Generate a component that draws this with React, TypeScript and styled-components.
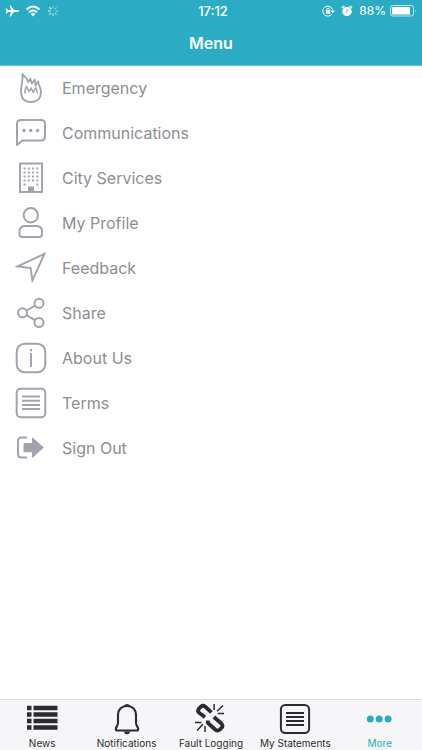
import React from "react";
import styled, { createGlobalStyle } from "styled-components";

const teal = "#2bacc4";
const grey = "#a3a3ad";
const dark = "#2c2c30";

const GlobalStyle = createGlobalStyle`
  *, *::before, *::after { box-sizing: border-box; }
  body {
    margin: 0;
    background: #fff;
    font-family: Inter, "Liberation Sans", sans-serif;
  }
`;

const Screen = styled.div`
  display: flex;
  flex-direction: column;
  min-height: 100vh;
`;

const Header = styled.header`
  background: ${teal};
  color: #fff;
  box-shadow: 0 1px 0 #6cc3d5;
`;

const StatusBar = styled.div`
  display: grid;
  grid-template-columns: 1fr auto 1fr;
  align-items: center;
  height: 22px;
  padding: 0 5px;
`;

const StatusGroup = styled.div<{ $end?: boolean }>`
  display: flex;
  align-items: center;
  justify-content: ${(p) => (p.$end ? "flex-end" : "flex-start")};
  gap: ${(p) => (p.$end ? 4 : 6)}px;
`;

const Alarm = styled.svg`
  margin: 0 2px;
`;

const Clock = styled.time`
  padding-left: 4px;
  font-size: 13px;
  font-weight: 500;
  line-height: 16px;
`;

const Charge = styled.span`
  font-size: 12px;
  line-height: 16px;
`;

const Title = styled.h1`
  margin: 0;
  height: 43px;
  font-size: 16px;
  font-weight: 600;
  line-height: 43px;
  text-align: center;
`;

const Main = styled.main`
  flex: 1;
`;

const List = styled.ul`
  margin: 0;
  padding: 0;
  list-style: none;
`;

const MenuLink = styled.a`
  display: flex;
  align-items: center;
  gap: 15px;
  height: 45px;
  padding: 0 15px;
  color: #8e8e93;
  font-size: 16px;
  line-height: 24px;
  text-decoration: none;
`;

const RowIcon = styled.svg`
  flex: none;
  width: 32px;
  height: 32px;
  fill: none;
  stroke: ${grey};
  stroke-width: 2;
  stroke-linejoin: round;
`;

const TabBar = styled.nav`
  position: sticky;
  bottom: 0;
  display: grid;
  grid-template-columns: repeat(5, 1fr);
  background: #f6f6f8;
  border-top: 1px solid #d9d9dc;
`;

const Tab = styled.button<{ $active?: boolean }>`
  display: flex;
  flex-direction: column;
  align-items: center;
  gap: 2px;
  min-width: 0;
  padding: 3px 0 0;
  border: 0;
  background: none;
  color: ${(p) => (p.$active ? teal : dark)};
  font-family: inherit;
  font-size: 10px;
  line-height: 13px;
  white-space: nowrap;
`;

const TabIcon = styled.svg`
  width: 32px;
  height: 32px;
  fill: none;
  stroke: currentColor;
  stroke-width: 2;
`;

const buildingDots = [6, 10, 14, 18].flatMap((y) => [9.5, 13.8, 18.1, 22.4].map((x) => ({ x, y })));

const menu: { label: string; icon: React.ReactNode }[] = [
  {
    label: "Emergency",
    icon: (
      <>
        <path
          strokeWidth="1.8"
          d="M7.300 2C8.500 8 6 12.500 6 19.500C6.200 26.500 10 30 15.800 30C22 30 26 26.300 26 20C26 16.500 23.800 14 23.200 9.500L20.500 13.500L19.700 7.500L16.900 11.500L15.300 6.600L13.300 10C12 6.300 9.800 4.500 7.300 2Z"
        />
        <path
          strokeWidth="1.500"
          d="M9.800 21.500C9.500 18.500 10.800 16.500 11.500 14.500L14 19.500L16.200 16L18.200 20.500L20.800 15.500C21.300 17.500 22.500 18.500 22.200 21.500"
        />
      </>
    ),
  },
  {
    label: "Communications",
    icon: (
      <>
        <path d="M2 28V7Q2 3 6 3H26Q30 3 30 7V19.500Q30 23.500 26 23.500H7.500Z" />
        <g fill={grey} stroke="none">
          <circle cx="9" cy="13.500" r="1.700" />
          <circle cx="15.800" cy="13.500" r="1.700" />
          <circle cx="22.600" cy="13.500" r="1.700" />
        </g>
      </>
    ),
  },
  {
    label: "City Services",
    icon: (
      <>
        <rect x="5" y="1.500" width="22" height="28.500" strokeLinejoin="miter" />
        <g fill={grey} stroke="none">
          {buildingDots.map((d) => (
            <rect key={`${d.x}-${d.y}`} x={d.x - 1} y={d.y - 0.5} width="2" height="2" />
          ))}
          <rect x="8.500" y="21.500" width="2" height="2" />
          <rect x="21.400" y="21.500" width="2" height="2" />
          <rect x="13" y="24.500" width="6" height="5" />
        </g>
      </>
    ),
  },
  {
    label: "My Profile",
    icon: (
      <>
        <circle cx="15.800" cy="8.300" r="7.200" />
        <path d="M10 19H21.500Q27 19 27 24.500V27Q27 30 24 30H7.500Q4.500 30 4.500 27V24.500Q4.500 19 10 19Z" />
      </>
    ),
  },
  {
    label: "Feedback",
    icon: <path strokeWidth="1.900" strokeLinejoin="miter" d="M2.500 14.300L29.500 1.800L17.400 28.500L15.600 16Z" />,
  },
  {
    label: "Share",
    icon: (
      <>
        <circle cx="7.500" cy="15.800" r="4.500" />
        <circle cx="24" cy="6.300" r="4.500" />
        <circle cx="24" cy="25.500" r="4.500" />
        <path d="M11.500 13.500L20 8.600M11.500 18.200L20 23.200" />
      </>
    ),
  },
  {
    label: "About Us",
    icon: (
      <>
        <rect x="1.700" y="1.700" width="28.600" height="28.600" rx="8" />
        <path d="M16 11V25M16 7V9.300" />
      </>
    ),
  },
  {
    label: "Terms",
    icon: (
      <>
        <rect x="1.700" y="1.700" width="28.600" height="28.600" rx="4" />
        <path d="M7 9.500H25M7 13.700H25M7 17.900H25M7 22.100H25" />
      </>
    ),
  },
  {
    label: "Sign Out",
    icon: (
      <>
        <path d="M12 5.500H6.500Q3 5.500 3 9V22Q3 25.500 6.500 25.500H12" />
        <path fill={grey} strokeWidth="1" d="M9 11.500H17.500V6L28.300 15.500L17.500 25.300V19.800H9Z" />
      </>
    ),
  },
];

const tabs: { label: string; active?: boolean; icon: React.ReactNode }[] = [
  {
    label: "News",
    icon: (
      <path
        strokeWidth="4.600"
        d="M1 5H5.500M7.500 5H31.500M1 11.500H5.500M7.500 11.500H31.500M1 18H5.500M7.500 18H31.500M1 24.500H5.500M7.500 24.500H31.500"
      />
    ),
  },
  {
    label: "Notifications",
    icon: (
      <>
        <path
          strokeWidth="2.100"
          strokeLinejoin="round"
          d="M16 3C10.300 3 7 6.500 7 12V20C7 22.500 4.800 24 4.800 26Q4.800 27.500 6.300 27.500H25.700Q27.200 27.500 27.200 26C27.200 24 25 22.500 25 20V12C25 6.500 21.700 3 16 3Z"
        />
        <path fill="currentColor" stroke="none" d="M12.500 3Q16 -1 19.500 3ZM12.700 28.500H19.300Q18.500 31.300 16 31.300Q13.500 31.300 12.700 28.500Z" />
      </>
    ),
  },
  {
    label: "Fault Logging",
    icon: (
      <>
        <path
          strokeWidth="3.800"
          d="M10 14.200L4 9.700Q2.200 7.800 4 5.500L5.900 3.700Q7.900 2 10.100 3.600L16.400 9.300M18.900 14L26.400 20.500Q28.400 22.500 26.600 24.800L24.800 26.600Q22.600 28.400 20.400 26.700L12.900 20L12.900 17.500"
        />
        <path
          strokeWidth="1.500"
          d="M19.100 1V7M28 2.500L22 8.200M29 10.500H22.700M0 19.500H6.500M2 27.500L8 21.300M10 29V23"
        />
      </>
    ),
  },
  {
    label: "My Statements",
    icon: (
      <>
        <rect x="1.900" y="1.900" width="28.200" height="28.200" rx="4.500" />
        <path d="M7 10H25M7 14H25M7 18H25M7 22H25" />
      </>
    ),
  },
  {
    label: "More",
    active: true,
    icon: (
      <g fill="currentColor" stroke="none">
        <circle cx="6.300" cy="16" r="3.500" />
        <circle cx="15.200" cy="16" r="3.500" />
        <circle cx="24.100" cy="16" r="3.500" />
      </g>
    ),
  },
];

const spokes = [0, 45, 90, 135, 180, 225, 270, 315];

export default function App() {
  return (
    <Screen>
      <GlobalStyle />
      <Header>
        <StatusBar>
          <StatusGroup>
            <svg width="14" height="12" viewBox="0 0 14 12" fill="#fff" aria-label="Airplane mode">
              <path d="M14 6Q14 6.900 12.500 6.900H9L5.800 11.500H4.500L6 6.900H3L1.700 8.500H0.800L1.500 6L0.800 3.500H1.700L3 5.100H6L4.500 0.500H5.800L9 5.100H12.500Q14 5.100 14 6Z" />
            </svg>
            <svg width="16" height="12" viewBox="0 0 16 12" fill="none" stroke="#fff" strokeWidth="2" aria-label="Wi-Fi">
              <path d="M1.500 4.500Q8 -1.500 14.500 4.500M4 7.300Q8 3.600 12 7.300" />
              <path fill="#fff" stroke="none" d="M5.500 9Q8 7 10.500 9L8 11.500Z" />
            </svg>
            <svg width="12" height="12" viewBox="-6 -6 12 12" stroke="#fff" strokeWidth="1.100" aria-label="Loading">
              {spokes.map((a, i) => (
                <path key={a} d="M0 -2.500V-5" transform={`rotate(${a})`} opacity={0.4 + i * 0.08} />
              ))}
            </svg>
          </StatusGroup>
          <Clock>17:12</Clock>
          <StatusGroup $end>
            <svg width="13" height="12" viewBox="0 0 13 12" fill="none" stroke="#fff" aria-label="Rotation locked">
              <path d="M10 8.800A5 5 0 1 1 10.500 4.500" />
              <path d="M8.800 5.500H12.800L10.800 8.200Z" fill="#fff" stroke="none" />
              <rect x="3.800" y="5.300" width="4.400" height="3.400" fill="#fff" stroke="none" />
              <path d="M4.700 5.500V4.300Q4.700 3.200 6 3.200Q7.300 3.200 7.300 4.300V5.500" />
            </svg>
            <Alarm width="12" height="12" viewBox="0 0 12 12" aria-label="Alarm">
              <circle cx="6" cy="6.500" r="4.700" fill="#fff" />
              <path d="M1 3L3.200 1M11 3L8.800 1" stroke="#fff" strokeWidth="1.600" />
              <path d="M6.200 4V6.800H4.300" fill="none" stroke={teal} strokeWidth="0.700" />
            </Alarm>
            <Charge>88%</Charge>
            <svg width="27" height="12" viewBox="0 0 27 12" aria-label="Battery">
              <rect x="0.500" y="0.500" width="23" height="10.500" rx="2" fill="none" stroke="#fff" opacity="0.700" />
              <rect x="2" y="2" width="18" height="7.500" rx="0.500" fill="#fff" />
              <path d="M25 4.200Q26.500 6 25 7.800Z" fill="#fff" opacity="0.700" />
            </svg>
          </StatusGroup>
        </StatusBar>
        <Title>Menu</Title>
      </Header>
      <Main>
        <List>
          {menu.map((item) => (
            <li key={item.label}>
              <MenuLink href="#">
                <RowIcon viewBox="0 0 32 32" aria-hidden="true">
                  {item.icon}
                </RowIcon>
                {item.label}
              </MenuLink>
            </li>
          ))}
        </List>
      </Main>
      <TabBar>
        {tabs.map((tab) => (
          <Tab key={tab.label} type="button" $active={tab.active} aria-current={tab.active ? "page" : undefined}>
            <TabIcon viewBox="0 0 32 32" aria-hidden="true">
              {tab.icon}
            </TabIcon>
            {tab.label}
          </Tab>
        ))}
      </TabBar>
    </Screen>
  );
}
